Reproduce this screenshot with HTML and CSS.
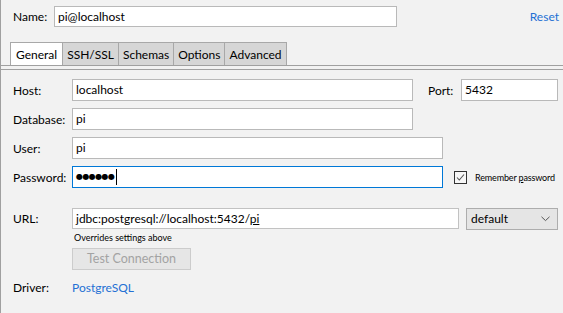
FILE: index.html
```html
<html>
<head>
<title>Data Source</title>
<link rel="stylesheet" href="styles.css">
</head>
<body>

<div class="page">

<div class="top">
  <span class="nameLabel">Name:</span>
  <div class="field nameField">pi@localhost</div>
  <a class="link reset" href="#">Reset</a>
</div>

<div class="tabs">
  <div class="tab active">General</div>
  <div class="tab">SSH/SSL</div>
  <div class="tab">Schemas</div>
  <div class="tab">Options</div>
  <div class="tab">Advanced</div>
</div>
<div class="rule"></div>

<div class="form">

  <div class="row">
    <span class="label">Host:</span>
    <div class="field hostField">localhost</div>
    <span class="portLabel">Port:</span>
    <div class="field portField">5432</div>
  </div>

  <div class="row">
    <span class="label">Database:</span>
    <div class="field hostField">pi</div>
  </div>

  <div class="row">
    <span class="label">User:</span>
    <div class="field userField">pi</div>
  </div>

  <div class="row">
    <span class="label">Password:</span>
    <div class="field userField focused"><span class="dots">&#9679;&#9679;&#9679;&#9679;&#9679;&#9679;</span><span class="caret"></span></div>
    <span class="checkbox">
      <svg width="11" height="11" viewBox="0 0 11 11"><path d="M2 5.5 L4.3 8 L9 2.5" fill="none" stroke="#555" stroke-width="1.1"/></svg>
    </span>
    <span class="small">Remember <u>p</u>assword</span>
  </div>

  <div class="row urlRow">
    <span class="label">URL:</span>
    <div class="field urlField">jdbc:postgresql://localhost:5432/<u>pi</u></div>
    <div class="select">
      <span>default</span>
      <svg width="9" height="6" viewBox="0 0 9 6"><path d="M0.5 0.8 L4.5 4.6 L8.5 0.8" fill="none" stroke="#555" stroke-width="1"/></svg>
    </div>
  </div>

  <div class="hint">Overrides settings above</div>

  <div class="button">Test Connection</div>

  <div class="row driverRow">
    <span class="label">Driver:</span>
    <a class="link" href="#">PostgreSQL</a>
  </div>

</div>

</div>

</body>
</html>
```

FILE: styles.css
```css
body {
	margin: 0;
	background-color: #f2f2f2;
	font-family: Lato, "Liberation Sans", sans-serif;
	font-size: 12px;
	color: #000;
}

.page {
	height: 313px;
	border-left: 1px solid #a0a0a0;
	box-sizing: border-box;
}

.top {
	display: flex;
	align-items: center;
	height: 21px;
	padding: 6px 4px 0 12px;
}

.nameLabel {
	width: 41px;
}

.field {
	flex-shrink: 0;
	height: 22px;
	line-height: 20px;
	border: 1px solid #b9b9b9;
	background-color: white;
	box-sizing: border-box;
	padding: 0 3px;
	white-space: nowrap;
}

.nameField {
	width: 343px;
	height: 21px;
	line-height: 19px;
}

.link {
	color: #2470d4;
	text-decoration: none;
}

.reset {
	margin-left: auto;
}

.tabs {
	display: flex;
	margin-top: 15px;
	padding-left: 9px;
	border-bottom: 1px solid #a0a0a0;
}

.tab {
	height: 23px;
	line-height: 23px;
	padding: 0 4px;
	border: 1px solid #a8a8a8;
	border-bottom: none;
	margin-left: -1px;
	background-color: #d6d6d6;
	box-sizing: border-box;
}

.tab.active {
	margin-left: 0;
	padding: 0 5px;
	background-color: white;
}

.rule {
	margin-top: 3px;
	border-top: 1px solid #a0a0a0;
}

.form {
	padding: 9px 0 0 12px;
}

.row {
	display: flex;
	align-items: center;
	height: 22px;
	margin-bottom: 7px;
	white-space: nowrap;
}

.label {
	flex-shrink: 0;
	width: 59px;
}

.hostField {
	width: 341px;
}

.portLabel {
	margin-left: 15px;
	width: 33px;
}

.portField {
	width: 97px;
}

.userField {
	width: 371px;
}

.focused {
	border-color: #0078d7;
	display: flex;
	align-items: center;
}

.dots {
	font-family: "DejaVu Sans", sans-serif;
	font-size: 8px;
	letter-spacing: -0.6px;
}

.caret {
	display: inline-block;
	width: 1px;
	height: 16px;
	margin-left: 2px;
	background-color: black;
}

.checkbox {
	flex-shrink: 0;
	display: flex;
	align-items: center;
	justify-content: center;
	width: 13px;
	height: 13px;
	margin-left: 11px;
	border: 1px solid #333;
	background-color: #f7f7f7;
	box-sizing: border-box;
}

.small {
	font-size: 9px;
	margin-left: 8px;
	letter-spacing: -0.15px;
}

.urlRow {
	margin-top: 20px;
	margin-bottom: 0;
	height: 21px;
}

.urlField {
	width: 387px;
	height: 21px;
	line-height: 19px;
	border-color: #c2c2c2;
}

.select {
	flex-shrink: 0;
	display: flex;
	align-items: center;
	justify-content: space-between;
	width: 92px;
	height: 22px;
	margin-left: 7px;
	padding: 0 7px 0 4px;
	border: 1px solid #adadad;
	background-color: #e5e5e5;
	box-sizing: border-box;
}

.hint {
	font-size: 9px;
	margin: 2px 0 0 61px;
	height: 14px;
	line-height: 14px;
}

.button {
	width: 119px;
	height: 22px;
	line-height: 20px;
	margin: 3px 0 0 59px;
	border: 1px solid #cccccc;
	background-color: #e6e6e6;
	color: #a3a3a3;
	text-align: center;
	box-sizing: border-box;
	font-size: 12.5px;
}

.driverRow {
	margin-top: 6px;
}
```
